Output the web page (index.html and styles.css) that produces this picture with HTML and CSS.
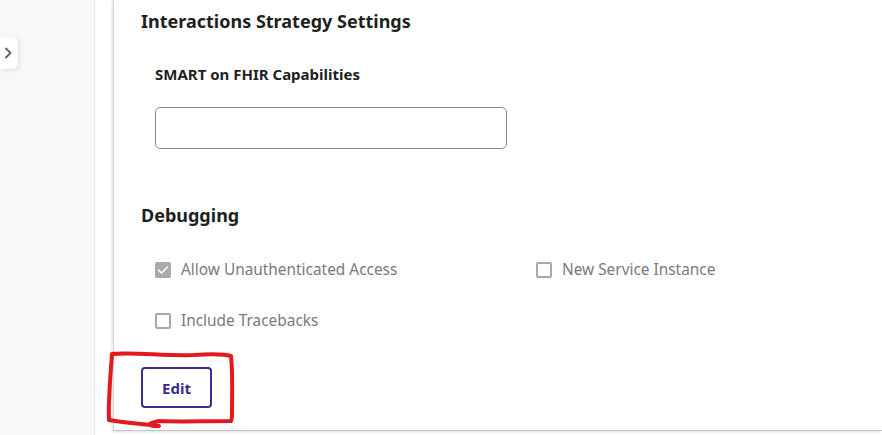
FILE: index.html
```html
<!DOCTYPE html>
<html>
<head>
<meta charset="utf-8">
<link rel="stylesheet" href="styles.css">
</head>
<body>
<div class="page">
  <aside class="sidebar">
    <div class="toggle">
      <svg width="10" height="14" viewBox="0 0 10 14"><path d="M3 2.5 L7.5 7 L3 11.5" fill="none" stroke="#5b6373" stroke-width="1.8" stroke-linecap="round" stroke-linejoin="round"/></svg>
    </div>
  </aside>
  <main class="main">
    <section class="card">
      <h2 class="section-title">Interactions Strategy Settings</h2>
      <div class="field">
        <label class="field-label">SMART on FHIR Capabilities</label>
        <div class="input"></div>
      </div>
      <h2 class="section-title debug-title">Debugging</h2>
      <div class="checks">
        <div class="check">
          <span class="box checked">
            <svg width="12" height="10" viewBox="0 0 12 10"><path d="M1.5 5.2 L4.5 8 L10.5 2" fill="none" stroke="#fff" stroke-width="1.6" stroke-linecap="round" stroke-linejoin="round"/></svg>
          </span>
          <span class="check-label">Allow Unauthenticated Access</span>
        </div>
        <div class="check">
          <span class="box"></span>
          <span class="check-label">New Service Instance</span>
        </div>
        <div class="check">
          <span class="box"></span>
          <span class="check-label">Include Tracebacks</span>
        </div>
      </div>
      <div class="actions">
        <button class="btn">Edit</button>
        <svg class="annotation" width="140" height="90" viewBox="0 0 140 90"><path d="M8 4 C30 2 60 6 90 5 C105 4 120 4 127 6 C129 25 128 45 128 62 C128 68 128 70 127 71 C100 71 75 72 55 71 C45 73 40 76 55 76 C45 74 20 73 5 70 C4 55 6 30 8 4 Z" fill="none" stroke="#e3191c" stroke-width="4" stroke-linejoin="round" stroke-linecap="round"/></svg>
      </div>
    </section>
  </main>
</div>
</body>
</html>
```
FILE: styles.css
```css
* { box-sizing: border-box; }
html, body { margin: 0; padding: 0; }
body {
  font-family: "Noto Sans", "Open Sans", sans-serif;
  background: #ffffff;
  color: #1f1f1f;
  width: 882px;
  height: 435px;
  overflow: hidden;
}
.page {
  display: flex;
  height: 435px;
}
.sidebar {
  width: 95px;
  flex: none;
  background: #f8f8f8;
  border-right: 1px solid #e9e9e9;
  padding-top: 37px;
}
.toggle {
  width: 18px;
  height: 32px;
  background: #ffffff;
  border-radius: 0 5px 5px 0;
  box-shadow: 1px 1px 4px rgba(0,0,0,0.12);
  display: flex;
  align-items: center;
  justify-content: center;
  padding-right: 2px;
}
.main {
  flex: 1;
  padding-left: 18px;
  display: flex;
  flex-direction: column;
}
.card {
  height: 431px;
  background: #fff;
  border-left: 1px solid #d6d6d6;
  border-bottom: 1px solid #c4c4c4;
  box-shadow: -1px 1px 3px rgba(0,0,0,0.12);
  padding: 8px 0 0 27px;
}
.section-title {
  margin: 0;
  font-size: 18px;
  line-height: 26px;
  font-weight: 700;
  color: #1f1f1f;
}
.field {
  padding-left: 14px;
  margin-top: 29px;
}
.field-label {
  display: block;
  font-size: 15px;
  line-height: 22px;
  font-weight: 700;
  color: #1f1f1f;
}
.input {
  margin-top: 22px;
  width: 352px;
  height: 42px;
  border: 1px solid #8a8a8a;
  border-radius: 5px;
  background: #fff;
}
.debug-title {
  margin-top: 53px;
}
.checks {
  padding-left: 14px;
  margin-top: 32px;
  display: grid;
  grid-template-columns: 381px auto;
  row-gap: 31px;
}
.check {
  display: flex;
  align-items: center;
  gap: 10px;
  height: 20px;
}
.box {
  width: 16px;
  height: 16px;
  border: 2px solid #a8a8a8;
  border-radius: 2px;
  display: flex;
  align-items: center;
  justify-content: center;
  background: #fff;
}
.box.checked {
  background: #aaaaaa;
  border-color: #aaaaaa;
}
.check-label {
  font-size: 15.4px;
  color: #7a7a7a;
  line-height: 20px;
}
.actions {
  position: relative;
  margin-top: 36px;
}
.btn {
  width: 71px;
  height: 41px;
  border: 2px solid #3f2b8f;
  border-radius: 4px;
  background: #fff;
  color: #3f2b8f;
  font-family: "Noto Sans", "Open Sans", sans-serif;
  font-weight: 700;
  font-size: 15px;
  padding: 0;
}
.annotation {
  position: absolute;
  left: -37px;
  top: -17px;
  pointer-events: none;
}
```
